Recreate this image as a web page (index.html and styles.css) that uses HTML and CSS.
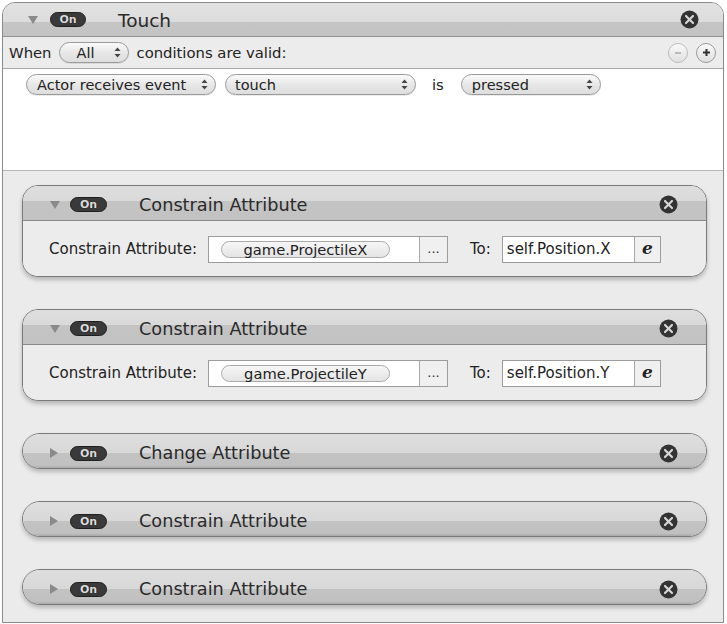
FILE: index.html
```html
<!DOCTYPE html>
<html>
<head>
<meta charset="utf-8">
<link rel="stylesheet" href="styles.css">
</head>
<body>
<div class="frame">
  <div class="head">
    <span class="tri-down"></span>
    <span class="badge">On</span>
    <span class="head-title">Touch</span>
    <span class="spacer"></span>
    <svg class="close" width="19" height="19" viewBox="0 0 19 19"><circle cx="9.5" cy="9.5" r="9" fill="#333"/><path d="M6 6 L13 13 M13 6 L6 13" stroke="#d6d6d6" stroke-width="2.2" stroke-linecap="round"/></svg>
  </div>
  <div class="when-row">
    <span class="lbl">When</span>
    <span class="popup pop-all"><span class="pop-text">All</span><svg class="arrows" width="7" height="11" viewBox="0 0 7 11"><path d="M3.5 0.5 L6.5 4 L0.5 4 Z M0.5 7 L6.5 7 L3.5 10.5 Z" fill="#444"/></svg></span>
    <span class="lbl">conditions are valid:</span>
    <span class="spacer"></span>
    <span class="round-btn minus"><svg width="8" height="8" viewBox="0 0 8 8"><path d="M1 4 H7" stroke="#aaa" stroke-width="1.5"/></svg></span>
    <span class="round-btn plus"><svg width="9" height="9" viewBox="0 0 9 9"><path d="M1 4.5 H8 M4.5 1 V8" stroke="#333" stroke-width="2"/></svg></span>
  </div>
  <div class="cond-area">
    <div class="cond-row">
      <span class="popup pop-actor"><span class="pop-text">Actor receives event</span><svg class="arrows" width="7" height="11" viewBox="0 0 7 11"><path d="M3.5 0.5 L6.5 4 L0.5 4 Z M0.5 7 L6.5 7 L3.5 10.5 Z" fill="#444"/></svg></span>
      <span class="popup pop-touch"><span class="pop-text">touch</span><svg class="arrows" width="7" height="11" viewBox="0 0 7 11"><path d="M3.5 0.5 L6.5 4 L0.5 4 Z M0.5 7 L6.5 7 L3.5 10.5 Z" fill="#444"/></svg></span>
      <span class="lbl is">is</span>
      <span class="popup pop-pressed"><span class="pop-text">pressed</span><svg class="arrows" width="7" height="11" viewBox="0 0 7 11"><path d="M3.5 0.5 L6.5 4 L0.5 4 Z M0.5 7 L6.5 7 L3.5 10.5 Z" fill="#444"/></svg></span>
    </div>
  </div>
  <div class="actions">
    <div class="card open">
      <div class="card-head">
        <span class="tri-down"></span>
        <span class="badge">On</span>
        <span class="card-title">Constrain Attribute</span>
        <span class="spacer"></span>
        <svg class="close" width="19" height="19" viewBox="0 0 19 19"><circle cx="9.5" cy="9.5" r="9" fill="#333"/><path d="M6 6 L13 13 M13 6 L6 13" stroke="#d6d6d6" stroke-width="2.2" stroke-linecap="round"/></svg>
      </div>
      <div class="card-body">
        <span class="lbl body-lbl">Constrain Attribute:</span>
        <span class="field attr-field"><span class="attr-pill">game.ProjectileX</span><span class="dots">...</span></span>
        <span class="lbl body-lbl to">To:</span>
        <span class="field expr-field"><span class="expr-text">self.Position.X</span><span class="e-btn">e</span></span>
      </div>
    </div>
    <div class="card open">
      <div class="card-head">
        <span class="tri-down"></span>
        <span class="badge">On</span>
        <span class="card-title">Constrain Attribute</span>
        <span class="spacer"></span>
        <svg class="close" width="19" height="19" viewBox="0 0 19 19"><circle cx="9.5" cy="9.5" r="9" fill="#333"/><path d="M6 6 L13 13 M13 6 L6 13" stroke="#d6d6d6" stroke-width="2.2" stroke-linecap="round"/></svg>
      </div>
      <div class="card-body">
        <span class="lbl body-lbl">Constrain Attribute:</span>
        <span class="field attr-field"><span class="attr-pill">game.ProjectileY</span><span class="dots">...</span></span>
        <span class="lbl body-lbl to">To:</span>
        <span class="field expr-field"><span class="expr-text">self.Position.Y</span><span class="e-btn">e</span></span>
      </div>
    </div>
    <div class="card closed">
      <div class="card-head">
        <span class="tri-right"></span>
        <span class="badge">On</span>
        <span class="card-title">Change Attribute</span>
        <span class="spacer"></span>
        <svg class="close" width="19" height="19" viewBox="0 0 19 19"><circle cx="9.5" cy="9.5" r="9" fill="#333"/><path d="M6 6 L13 13 M13 6 L6 13" stroke="#d6d6d6" stroke-width="2.2" stroke-linecap="round"/></svg>
      </div>
    </div>
    <div class="card closed">
      <div class="card-head">
        <span class="tri-right"></span>
        <span class="badge">On</span>
        <span class="card-title">Constrain Attribute</span>
        <span class="spacer"></span>
        <svg class="close" width="19" height="19" viewBox="0 0 19 19"><circle cx="9.5" cy="9.5" r="9" fill="#333"/><path d="M6 6 L13 13 M13 6 L6 13" stroke="#d6d6d6" stroke-width="2.2" stroke-linecap="round"/></svg>
      </div>
    </div>
    <div class="card closed">
      <div class="card-head">
        <span class="tri-right"></span>
        <span class="badge">On</span>
        <span class="card-title">Constrain Attribute</span>
        <span class="spacer"></span>
        <svg class="close" width="19" height="19" viewBox="0 0 19 19"><circle cx="9.5" cy="9.5" r="9" fill="#333"/><path d="M6 6 L13 13 M13 6 L6 13" stroke="#d6d6d6" stroke-width="2.2" stroke-linecap="round"/></svg>
      </div>
    </div>
  </div>
</div>
</body>
</html>
```
FILE: styles.css
```css
* { box-sizing: border-box; }
html, body { margin: 0; padding: 0; background: #fff; }
body {
  font-family: "DejaVu Sans", "Liberation Sans", sans-serif;
  color: #222;
  width: 727px;
  height: 624px;
  overflow: hidden;
}
.frame {
  margin: 2px 0 0 2px;
  width: 722px;
  height: 621px;
  border: 1px solid #8a8a8a;
  border-radius: 13px 13px 0 0;
  background: #ececec;
  overflow: hidden;
  display: flex;
  flex-direction: column;
}
.spacer { flex: 1; }
.head {
  height: 34px;
  flex: none;
  display: flex;
  align-items: center;
  padding: 0 24px 0 25px;
  background: linear-gradient(#e2e2e2 0, #dcdcdc 58%, #c5c5c5 58%, #c3c3c3 100%);
  border-bottom: 1px solid #8f8f8f;
}
.tri-down {
  width: 0; height: 0;
  border-left: 5px solid transparent;
  border-right: 5px solid transparent;
  border-top: 8px solid #8a8a8a;
  flex: none;
}
.tri-right {
  width: 0; height: 0;
  border-top: 5px solid transparent;
  border-bottom: 5px solid transparent;
  border-left: 8px solid #8a8a8a;
  flex: none;
  margin-right: 2px;
}
.badge {
  flex: none;
  width: 37px;
  height: 15px;
  border-radius: 8px;
  background: #3a3a3a;
  border: 1px solid #1e1e1e;
  color: #dcdcdc;
  font-size: 11px;
  font-weight: bold;
  line-height: 13px;
  text-align: center;
  text-shadow: 0 0 1px #000;
}
.head .badge { margin-left: 12px; width: 36px; }
.head-title {
  margin-left: 32px;
  font-size: 18.5px;
  color: #2a2a2a;
  margin-top: 1px;
}
.close { flex: none; display: block; }
.when-row {
  height: 32px;
  flex: none;
  display: flex;
  align-items: center;
  padding: 0 7px 0 6px;
  background: #ececec;
  border-bottom: 1px solid #a8a8a8;
}
.lbl { font-size: 14.8px; color: #222; white-space: nowrap; }
.popup {
  display: flex;
  align-items: center;
  height: 21px;
  border: 1px solid #9a9a9a;
  border-radius: 11px;
  background: linear-gradient(#fafafa, #e6e6e6 55%, #dedede);
  box-shadow: 0 1px 0 rgba(0,0,0,0.08);
  padding: 0 7px 0 10px;
  font-size: 14.5px;
  flex: none;
}
.pop-text { flex: 1; white-space: nowrap; color: #222; }
.arrows { flex: none; display: block; }
.pop-all { width: 70px; margin: 0 8px 0 7px; }
.pop-all .pop-text { padding-left: 7px; }
.round-btn {
  width: 20px; height: 20px;
  border-radius: 50%;
  border: 1px solid #9a9a9a;
  background: linear-gradient(#fafafa, #e0e0e0);
  display: flex;
  align-items: center;
  justify-content: center;
  flex: none;
}
.minus { border-color: #bcbcbc; margin-right: 8px; }
.cond-area {
  height: 102px;
  flex: none;
  background: #fff;
  border-bottom: 1px solid #b8b8b8;
  padding: 5px 0 0 23px;
}
.cond-row { display: flex; align-items: center; }
.pop-actor { width: 190px; }
.pop-touch { width: 191px; margin-left: 9px; padding-left: 9px; }
.is { margin: 0 17px 0 16px; }
.pop-pressed { width: 140px; padding-left: 10px; }
.actions {
  flex: 1;
  padding: 14px 16px 0 19px;
  display: flex;
  flex-direction: column;
  gap: 32px;
  background: #ebebeb;
}
.card {
  flex: none;
  border: 1px solid #7a7a7a;
  background: #ececec;
  box-shadow: 0 3px 4px rgba(0,0,0,0.22);
  overflow: hidden;
}
.card.open { border-radius: 16px; height: 92px; }
.card.closed { border-radius: 18px; height: 36px; }
.card-head {
  height: 35px;
  display: flex;
  align-items: center;
  padding: 3px 28px 0 27px;
  background: linear-gradient(#dedede 0, #d9d9d9 45%, #c4c4c4 45%, #c2c2c2 100%);
}
.open .card-head { border-bottom: 1px solid #8a8a8a; }
.closed .card-head {
  height: 34px;
  padding-top: 4px;
  background: linear-gradient(#dedede 0, #d8d8d8 56%, #c3c3c3 56%, #c0c0c0 92%, #a8a8a8 100%);
}
.card-head .badge { margin-left: 10px; }
.card-title {
  margin-left: 32px;
  font-size: 17.7px;
  color: #2a2a2a;
}
.card-body {
  height: 55px;
  display: flex;
  align-items: center;
  padding: 1px 0 0 26px;
  background: #ececec;
}
.body-lbl { font-size: 15px; }
.field {
  display: flex;
  align-items: stretch;
  height: 27px;
  border: 1px solid #9c9c9c;
  background: #fff;
  flex: none;
}
.attr-field { width: 240px; margin-left: 11px; }
.attr-pill {
  flex: 1;
  margin: 4px 29px 4px 12px;
  border: 1px solid #aaa;
  border-radius: 9px;
  background: linear-gradient(#f6f6f6, #e4e4e4);
  font-size: 14.7px;
  line-height: 16px;
  text-align: center;
  color: #222;
  white-space: nowrap;
}
.dots {
  width: 28px;
  flex: none;
  border-left: 1px solid #a8a8a8;
  background: #f0f0f0;
  font-size: 13px;
  text-align: center;
  line-height: 24px;
  color: #333;
}
.to { margin-left: 22px; }
.expr-field { width: 159px; margin-left: 11px; }
.expr-text {
  flex: 1;
  font-size: 15px;
  line-height: 25px;
  padding-left: 4px;
  color: #222;
  white-space: nowrap;
}
.e-btn {
  width: 26px;
  flex: none;
  border-left: 1px solid #a8a8a8;
  background: #f0f0f0;
  font-family: "DejaVu Serif", serif;
  font-style: italic;
  font-weight: bold;
  font-size: 17px;
  text-align: center;
  line-height: 22px;
  color: #222;
}
```
